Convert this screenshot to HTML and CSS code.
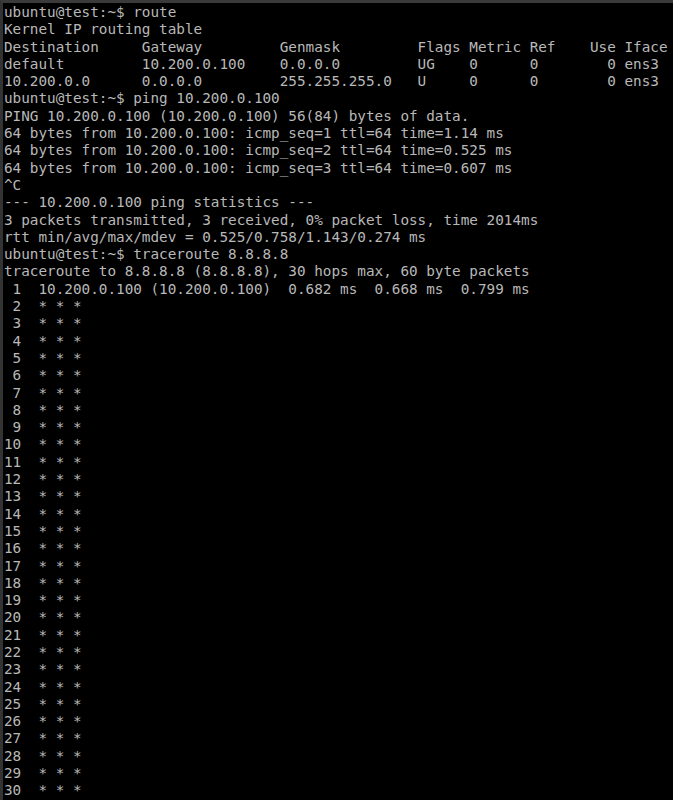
FILE: index.html
```html
<!DOCTYPE html>
<html>
<head>
<meta charset="utf-8">
<link rel="stylesheet" href="styles.css">
</head>
<body>
<div class="term"><pre class="out">ubuntu@test:~$ route
Kernel IP routing table
Destination     Gateway         Genmask         Flags Metric Ref    Use Iface
default         10.200.0.100    0.0.0.0         UG    0      0        0 ens3
10.200.0.0      0.0.0.0         255.255.255.0   U     0      0        0 ens3
ubuntu@test:~$ ping 10.200.0.100
PING 10.200.0.100 (10.200.0.100) 56(84) bytes of data.
64 bytes from 10.200.0.100: icmp_seq=1 ttl=64 time=1.14 ms
64 bytes from 10.200.0.100: icmp_seq=2 ttl=64 time=0.525 ms
64 bytes from 10.200.0.100: icmp_seq=3 ttl=64 time=0.607 ms
^C
--- 10.200.0.100 ping statistics ---
3 packets transmitted, 3 received, 0% packet loss, time 2014ms
rtt min/avg/max/mdev = 0.525/0.758/1.143/0.274 ms
ubuntu@test:~$ traceroute 8.8.8.8
traceroute to 8.8.8.8 (8.8.8.8), 30 hops max, 60 byte packets
 1  10.200.0.100 (10.200.0.100)  0.682 ms  0.668 ms  0.799 ms
 2  * * *
 3  * * *
 4  * * *
 5  * * *
 6  * * *
 7  * * *
 8  * * *
 9  * * *
10  * * *
11  * * *
12  * * *
13  * * *
14  * * *
15  * * *
16  * * *
17  * * *
18  * * *
19  * * *
20  * * *
21  * * *
22  * * *
23  * * *
24  * * *
25  * * *
26  * * *
27  * * *
28  * * *
29  * * *
30  * * *</pre></div>
</body>
</html>
```
FILE: styles.css
```css
html, body {
  margin: 0;
  padding: 0;
  background: #000;
}
.term {
  width: 673px;
  height: 800px;
  box-sizing: border-box;
  background: #000;
  border-top: 3px solid #3a3a3a;
  border-left: 3px solid #333;
  padding: 1px 0 0 1px;
  overflow: hidden;
}
.out {
  margin: 0;
  font-family: "DejaVu Sans Mono", monospace;
  font-size: 14.32px;
  line-height: 17.29px;
  color: #b8b8b8;
  white-space: pre;
}
```
